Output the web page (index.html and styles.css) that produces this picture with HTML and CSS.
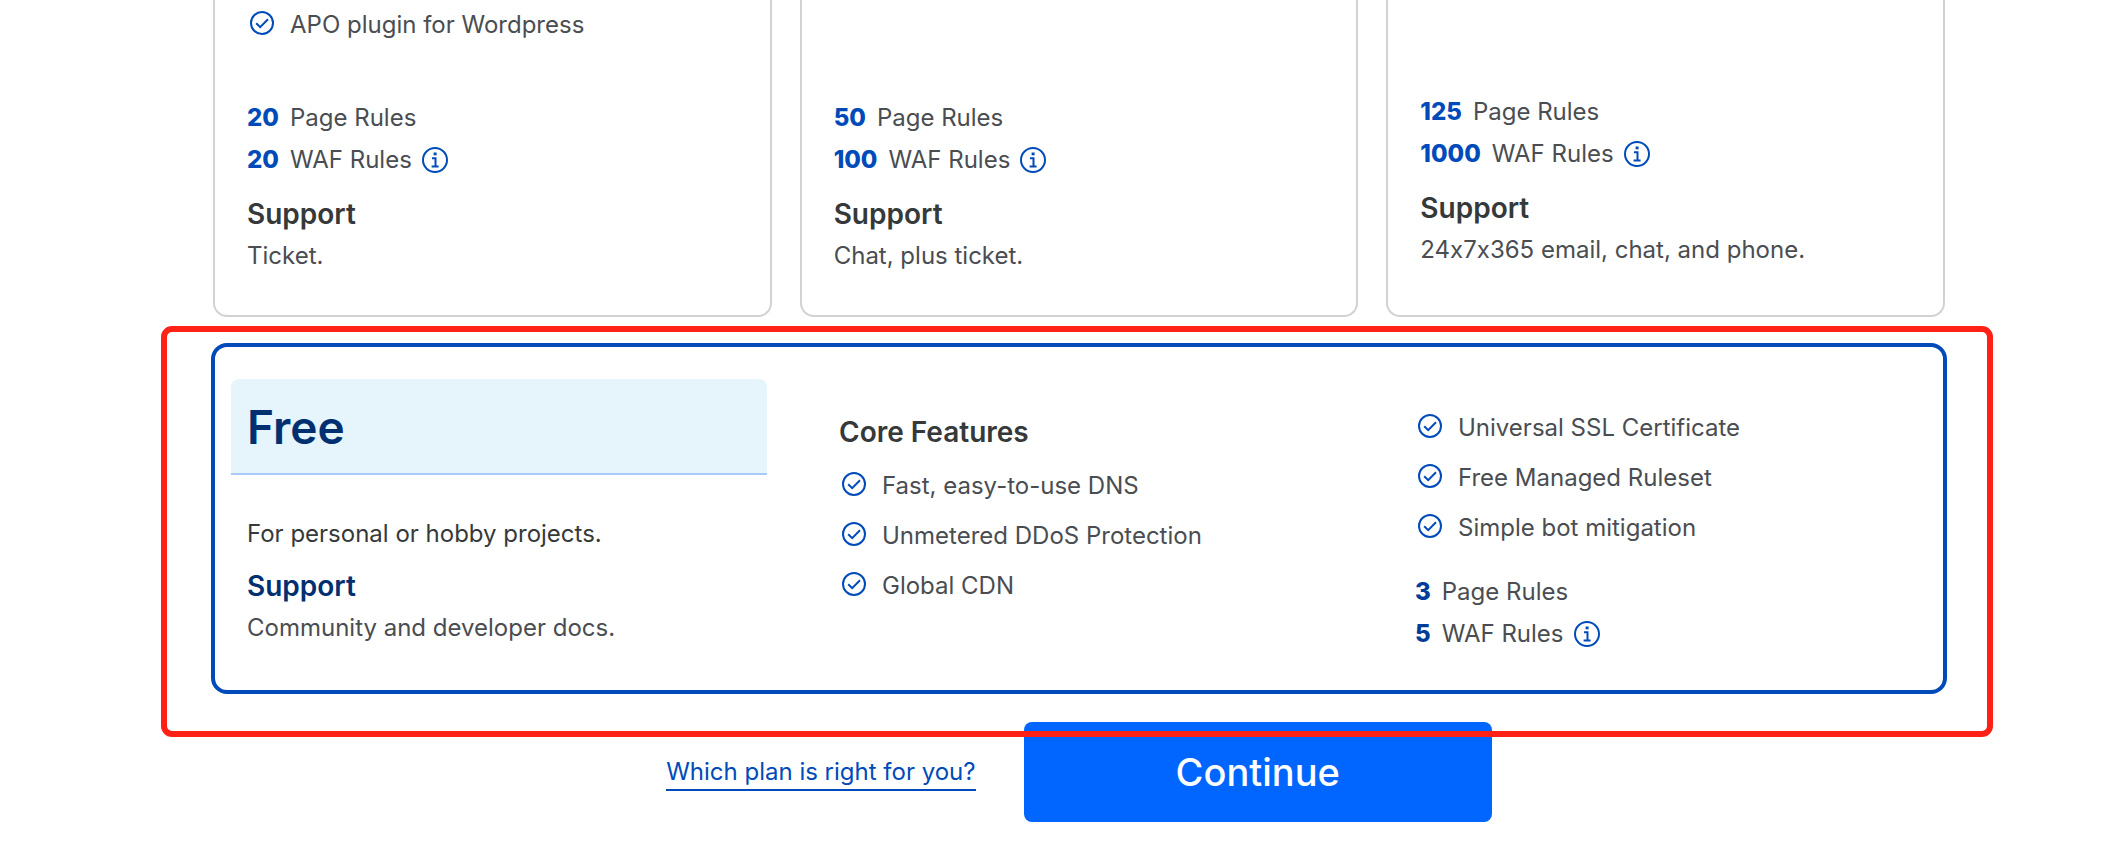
FILE: index.html
```html
<!DOCTYPE html>
<html lang="en">
<head>
<meta charset="utf-8">
<title>Choose a plan</title>
<link rel="stylesheet" href="styles.css">
</head>
<body>
<svg class="sprite" aria-hidden="true">
  <symbol id="check" viewBox="0 0 24 24">
    <circle cx="12" cy="12" r="11"/>
    <path d="M6.2 12.2l4 4 7.8-8"/>
  </symbol>
  <symbol id="info" viewBox="0 0 26 26">
    <circle cx="13" cy="13" r="12"/>
    <path d="M10 11.2h3.5v8M9.6 19.4h7"/>
    <path class="dot" d="M11.6 5.5h3v2.8h-3z"/>
  </symbol>
</svg>
<main class="page">
  <section class="plans" id="plans">
    <article class="card">
      <ul class="features features-top">
        <li><svg class="check"><use href="#check"/></svg>APO plugin for Wordpress</li>
      </ul>
      <p class="rule"><b>20</b>Page Rules</p>
      <p class="rule"><b>20</b>WAF Rules<button class="info" aria-label="About WAF rules"><svg><use href="#info"/></svg></button></p>
      <h3 class="heading">Support</h3>
      <p class="text">Ticket.</p>
    </article>
    <article class="card">
      <p class="rule"><b>50</b>Page Rules</p>
      <p class="rule"><b>100</b>WAF Rules<button class="info" aria-label="About WAF rules"><svg><use href="#info"/></svg></button></p>
      <h3 class="heading">Support</h3>
      <p class="text">Chat, plus ticket.</p>
    </article>
    <article class="card card-tall">
      <p class="rule"><b>125</b>Page Rules</p>
      <p class="rule"><b>1000</b>WAF Rules<button class="info" aria-label="About WAF rules"><svg><use href="#info"/></svg></button></p>
      <h3 class="heading">Support</h3>
      <p class="text">24x7x365 email, chat, and phone.</p>
    </article>
  </section>

  <div class="free-wrap">
    <article class="free">
      <div class="free-about">
        <h2 class="free-title">Free</h2>
        <div class="free-body">
          <p class="text text-dark">For personal or hobby projects.</p>
          <h3 class="heading heading-blue">Support</h3>
          <p class="text">Community and developer docs.</p>
        </div>
      </div>
      <div class="free-core">
        <h3 class="core-title">Core Features</h3>
        <ul class="features">
          <li><svg class="check"><use href="#check"/></svg>Fast, easy-to-use DNS</li>
          <li><svg class="check"><use href="#check"/></svg>Unmetered DDoS Protection</li>
          <li><svg class="check"><use href="#check"/></svg>Global CDN</li>
        </ul>
      </div>
      <div class="free-more">
        <ul class="features">
          <li><svg class="check"><use href="#check"/></svg>Universal SSL Certificate</li>
          <li><svg class="check"><use href="#check"/></svg>Free Managed Ruleset</li>
          <li><svg class="check"><use href="#check"/></svg>Simple bot mitigation</li>
        </ul>
        <div class="free-rules">
          <p class="rule"><b>3</b>Page Rules</p>
          <p class="rule"><b>5</b>WAF Rules<button class="info" aria-label="About WAF rules"><svg><use href="#info"/></svg></button></p>
        </div>
      </div>
    </article>
    <div class="marker"></div>
  </div>

  <footer class="actions">
    <a class="help" href="#plans">Which plan is right for you?</a>
    <button class="continue">Continue</button>
  </footer>
</main>
</body>
</html>
```
FILE: styles.css
```css
* {
  box-sizing: border-box;
}

body {
  margin: 0;
  background: #fff;
  color: #4a4d51;
  font: 24px/42px Inter, "Liberation Sans", sans-serif;
  font-feature-settings: "calt" 0;
}

h2, h3, p, ul {
  margin: 0;
  padding: 0;
}

.sprite {
  position: absolute;
  width: 0;
  height: 0;
}

.page {
  padding: 0 163px 39px 213px;
}

.plans {
  display: grid;
  grid-template-columns: repeat(3, 1fr);
  gap: 28px;
}

.card {
  display: flex;
  flex-direction: column;
  justify-content: flex-end;
  padding: 0 32px 38px;
  border: 2px solid #d2d2d2;
  border-top: 0;
  border-radius: 0 0 14px 14px;
}

.card-tall {
  padding-bottom: 44px;
}

.features {
  list-style: none;
}

.features li {
  display: flex;
  align-items: center;
  gap: 16px;
  padding-left: 3px;
  line-height: 50px;
}

.features-top {
  padding-bottom: 47px;
}

.check {
  flex: none;
  width: 24px;
  height: 24px;
  margin-bottom: 4px;
  fill: none;
  stroke: #004bb9;
  stroke-width: 2;
}

.rule {
  display: flex;
  align-items: center;
}

.rule b {
  margin-right: 11px;
  color: #004bb9;
  font-weight: 800;
}

.info {
  display: flex;
  margin-left: 10px;
  padding: 0;
  border: 0;
  background: none;
}

.info svg {
  width: 26px;
  height: 26px;
  fill: none;
  stroke: #004bb9;
  stroke-width: 2;
}

.dot {
  fill: #004bb9;
  stroke: none;
}

.heading {
  margin-top: 12px;
  color: #36393a;
  font-size: 28px;
  font-weight: 600;
  line-height: 42px;
}

.heading-blue {
  margin-top: 10px;
  color: #003070;
}

.text-dark {
  color: #36393a;
}

.free-wrap {
  position: relative;
  margin: 26px -2px 28px;
}

.free {
  display: grid;
  grid-template-columns: repeat(3, 1fr);
  padding-bottom: 35px;
  border: 4px solid #004bb9;
  border-radius: 16px;
}

.free-about {
  padding: 32px 24px 0 16px;
}

.free-title {
  padding: 2px 16px 0;
  border-bottom: 2px solid #a9cbfb;
  border-radius: 8px 8px 0 0;
  background: #e6f5fb;
  color: #003070;
  font-size: 46px;
  font-weight: 600;
  line-height: 92px;
}

.free-body {
  padding: 38px 16px 6px;
}

.free-core {
  padding: 64px 24px 0 48px;
}

.core-title {
  margin-bottom: 8px;
  color: #36393a;
  font-size: 28px;
  font-weight: 600;
  line-height: 42px;
}

.free-more {
  padding: 56px 24px 0 48px;
}

.free-rules {
  padding-top: 18px;
}

.free-rules b {
  color: #003d99;
}

.marker {
  position: absolute;
  inset: -17px -46px -43px -50px;
  border: 6px solid #ff2116;
  border-radius: 11px;
  pointer-events: none;
}

.actions {
  display: flex;
  align-items: center;
  justify-content: center;
  gap: 48px;
}

.help {
  padding-top: 2px;
  border-bottom: 2px solid #004bb9;
  color: #004bb9;
  line-height: 34px;
  text-decoration: none;
}

.continue {
  padding: 0 152px;
  border: 0;
  border-radius: 8px;
  background: #0066ff;
  color: #fff;
  font: 500 38px/100px Inter, "Liberation Sans", sans-serif;
}
```
